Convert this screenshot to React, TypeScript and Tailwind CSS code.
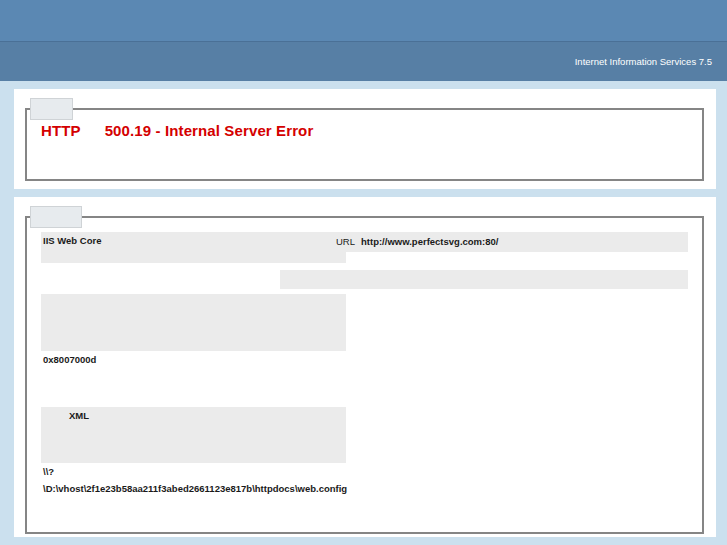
const font = { fontFamily: '"Liberation Sans", Arial, sans-serif' };

const Legend = ({ width }: { width: string }) => (
  <legend
    className={`ml-[3px] h-[22px] ${width} border border-[#cfd3d6] bg-[#e7ebee]`}
  />
);

export default function App() {
  return (
    <div className="min-h-[545px] bg-[#cbe0ee] pb-[8px]" style={font}>
      <div className="h-[41px] bg-[#5b88b3]" />
      <div className="flex h-[40px] items-center justify-end border-t border-[#4a7096] bg-[#577fa5] pr-[15px] pt-[2px]">
        <span className="text-[9.5px] text-white">Internet Information Services 7.5</span>
      </div>

      <div className="flex flex-col gap-[8px] pl-[14px] pr-[11px] pt-[8px]">
        <div className="bg-white pb-[8px] pl-[11px] pr-[12px] pt-[9px]">
          <fieldset className="h-[83px] border-2 border-[#858585]">
            <Legend width="w-[43px]" />
            <div className="flex pl-[14px] pt-[2px] text-[15px] font-bold leading-[18px] tracking-[0.12px] text-[#d40000]">
              <span>HTTP</span>
              <span className="ml-[24px]">500.19 - Internal Server Error</span>
            </div>
          </fieldset>
        </div>

        <div className="bg-white pb-[3px] pl-[11px] pr-[12px] pt-[9px]">
          <fieldset className="h-[328px] border-2 border-[#858585]">
            <Legend width="w-[52px]" />
            <div className="grid grid-cols-[239px_66px_342px] pl-[14px] pt-[4px] text-[9.5px] leading-[12px] text-[#1a1a1a]">
              <div className="col-span-2 col-start-1 row-start-1 flex flex-col">
                <div className="h-[31px] bg-[#ebebeb] pl-[2px] pt-[3px] font-bold">IIS Web Core</div>
                <div className="h-[31px]" />
                <div className="h-[57px] bg-[#ebebeb]" />
                <div className="h-[56px] pl-[2px] pt-[3px] font-bold">0x8007000d</div>
                <div className="h-[56px] bg-[#ebebeb] pl-[28px] pt-[3px] font-bold">XML</div>
                <div className="pl-[2px] font-bold leading-[17px]">
                  <div>\\?</div>
                  <div className="whitespace-nowrap">\D:\vhost\2f1e23b58aa211f3abed2661123e817b\httpdocs\web.config</div>
                </div>
              </div>
              <div className="col-span-2 col-start-2 row-start-1 flex flex-col">
                <div className="flex h-[20px] items-center bg-[#ebebeb] pl-[56px]">
                  <span>URL</span>
                  <span className="ml-[6px] font-bold">http://www.perfectsvg.com:80/</span>
                </div>
                <div className="mt-[18px] h-[19px] bg-[#ebebeb]" />
              </div>
            </div>
          </fieldset>
        </div>
      </div>
    </div>
  );
}
